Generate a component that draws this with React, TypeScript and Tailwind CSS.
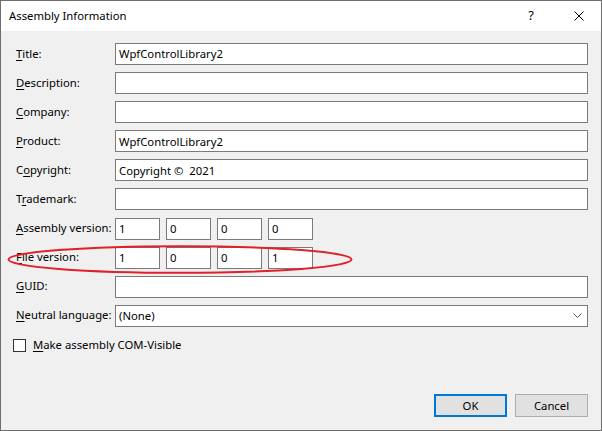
const rows: { key: string; rest: string; pre?: string; value?: string }[] = [
  { key: 'T', rest: 'itle:', value: 'WpfControlLibrary2' },
  { key: 'D', rest: 'escription:' },
  { key: 'C', rest: 'ompany:' },
  { key: 'P', rest: 'roduct:', value: 'WpfControlLibrary2' },
  { pre: 'C', key: 'o', rest: 'pyright:', value: 'Copyright ©  2021' },
  { pre: 'T', key: 'r', rest: 'ademark:' },
];

function Label({ pre, k, rest }: { pre?: string; k: string; rest: string }) {
  return (
    <span className="whitespace-nowrap">
      {pre}
      <span className="underline underline-offset-[2px]">{k}</span>
      {rest}
    </span>
  );
}

function Box({ value, className = '' }: { value?: string; className?: string }) {
  return (
    <div className={`h-[22px] border border-[#7a7a7a] bg-white pl-[3px] flex items-center leading-none whitespace-pre text-black ${className}`}>
      {value}
    </div>
  );
}

function Versions({ values }: { values: string[] }) {
  return (
    <div className="flex gap-[6px]">
      {values.map((v, i) => (
        <Box key={i} value={v} className="w-[45px]" />
      ))}
    </div>
  );
}

export default function App() {
  return (
    <div className="relative w-[602px] h-[431px] border border-[#6e6e6e] bg-[#f0f0f0] flex flex-col font-['Noto_Sans',sans-serif] text-[11.3px] text-black">
      {/* Title bar */}
      <div className="h-[30px] bg-white flex items-center pl-[8px] shrink-0">
        <span>Assembly Information</span>
        <span className="ml-auto mr-[40px] text-[13px]">?</span>
        <svg width="10" height="10" viewBox="0 0 10 10" className="mr-[17px]">
          <path d="M0.5 0.5 L9.5 9.5 M9.5 0.5 L0.5 9.5" stroke="#000" strokeWidth="1" />
        </svg>
      </div>

      {/* Form */}
      <div className="flex-1 flex flex-col pl-[15px] pr-[13px] pt-[12px] pb-[13px]">
        <div className="grid grid-cols-[99px_1fr] gap-y-[7.1px] items-center">
          {rows.map((r, i) => (
            <div key={i} className="contents">
              <Label pre={r.pre} k={r.key} rest={r.rest} />
              <Box value={r.value} />
            </div>
          ))}
          <Label k="A" rest="ssembly version:" />
          <Versions values={['1', '0', '0', '0']} />
          <Label k="F" rest="ile version:" />
          <Versions values={['1', '0', '0', '1']} />
          <Label k="G" rest="UID:" />
          <Box />
          <Label k="N" rest="eutral language:" />
          <div className="h-[22px] border border-[#7a7a7a] bg-white pl-[3px] pr-[5px] flex items-center leading-none">
            (None)
            <svg width="9" height="6" viewBox="0 0 9 6" className="ml-auto">
              <path d="M0.5 0.5 L4.5 4.5 L8.5 0.5" fill="none" stroke="#555" strokeWidth="1" />
            </svg>
          </div>
        </div>

        {/* Checkbox */}
        <div className="flex items-center gap-[7px] mt-[10px] -ml-[3px]">
          <div className="w-[13px] h-[13px] border border-[#333] bg-white" />
          <Label k="M" rest="ake assembly COM-Visible" />
        </div>

        {/* Buttons */}
        <div className="mt-auto flex justify-end gap-[8px]">
          <button className="w-[73px] h-[23px] border-2 border-[#0078d7] bg-[#e1e1e1] leading-none">OK</button>
          <button className="w-[73px] h-[23px] border border-[#adadad] bg-[#e1e1e1] leading-none">Cancel</button>
        </div>
      </div>

      {/* Red annotation ellipse */}
      <svg className="absolute left-0 top-0 pointer-events-none" width="602" height="431">
        <ellipse cx="179" cy="258.5" rx="171.5" ry="13.3" fill="none" stroke="#e0202a" strokeWidth="2" />
      </svg>
    </div>
  );
}
